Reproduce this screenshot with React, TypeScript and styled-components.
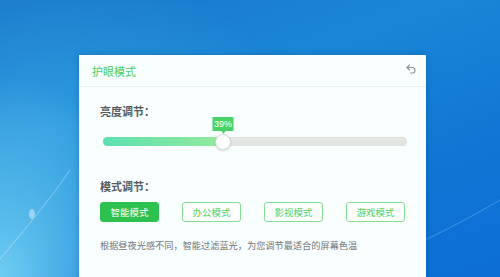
import styled, { createGlobalStyle } from 'styled-components';
import { Undo2 } from 'lucide-react';

const GlobalStyle = createGlobalStyle`
  html, body {
    margin: 0;
    padding: 0;
    overflow: hidden;
  }
  body {
    font-family: "Noto Sans CJK SC", "Noto Sans", sans-serif;
  }
`;

const Desktop = styled.div`
  position: relative;
  width: 500px;
  height: 277px;
  overflow: hidden;
  padding: 55px 0 0 79px;
  box-sizing: border-box;
  background:
    radial-gradient(ellipse 160px 200px at 0% 100%, rgba(120, 215, 245, 0.9), rgba(120, 215, 245, 0) 100%),
    radial-gradient(ellipse 240px 160px at 10% 45%, rgba(50, 160, 225, 0.8), rgba(50, 160, 225, 0) 100%),
    linear-gradient(160deg, #1877c9 0%, #1a86d6 35%, #0f76d4 70%, #0b6fd6 100%);
`;

const Streak = styled.svg`
  position: absolute;
  left: 0;
  top: 0;
  pointer-events: none;
`;

const Panel = styled.section`
  position: relative;
  width: 347px;
  height: 240px;
  background: #f9feff;
  box-shadow: 0 0 6px rgba(0, 40, 90, 0.25);
`;

const Header = styled.header`
  display: flex;
  align-items: center;
  justify-content: space-between;
  height: 31px;
  padding: 0 9px 0 13px;
  border-bottom: 1px solid #e6f3f3;
`;

const Title = styled.h1`
  margin: 0;
  font-size: 11px;
  font-weight: 400;
  color: #47cd5c;
  line-height: 18px;
`;

const BackButton = styled.button`
  display: flex;
  border: 0;
  padding: 0;
  background: none;
  color: #8c9499;
  margin-top: -3px;
`;

const Body = styled.div`
  padding: 15px 21px;
`;

const Label = styled.h2<{ $gap?: number }>`
  margin: ${({ $gap }) => $gap ?? 0}px 0 0;
  font-size: 11px;
  font-weight: 700;
  color: #555b60;
  line-height: 18px;
`;

const Track = styled.div`
  position: relative;
  margin: 17px 0 0 3px;
  width: 304px;
  height: 9px;
  border-radius: 5px;
  background: #e3e5e3;
  box-shadow: inset 0 0 0 1px #e0e2df;
`;

const Fill = styled.div`
  height: 100%;
  border-radius: 5px 0 0 5px;
  background: linear-gradient(90deg, #5ddfb1 0%, #7de6a4 60%, #96ea9c 100%);
`;

const Thumb = styled.div`
  position: absolute;
  top: 50%;
  width: 14px;
  height: 14px;
  margin: -8px 0 0 -8px;
  border-radius: 50%;
  background: #fff;
  border: 1px solid #d8dcd8;
  box-shadow: 0 1px 2px rgba(0, 0, 0, 0.15);
`;

const Tip = styled.div`
  position: absolute;
  bottom: 18px;
  left: 50%;
  transform: translateX(-50%);
  width: 21px;
  height: 14px;
  background: #49d265;
  color: #fff;
  font-family: "Liberation Sans", Arial, sans-serif;
  font-size: 9px;
  line-height: 14px;
  text-align: center;
  border-radius: 1px;

  &::after {
    content: '';
    position: absolute;
    left: 50%;
    top: 100%;
    margin-left: -2px;
    border: 2px solid transparent;
    border-top: 3px solid #49d265;
  }
`;

const Modes = styled.div`
  display: flex;
  gap: 23px;
  margin-top: 7px;
`;

const ModeButton = styled.button<{ $active?: boolean }>`
  width: 59px;
  height: 20px;
  padding: 0;
  box-sizing: border-box;
  border-radius: 3px;
  font-family: inherit;
  font-size: 9.5px;
  line-height: 17px;
  border: 1.5px solid ${({ $active }) => ($active ? '#2dc24f' : '#82de92')};
  background: ${({ $active }) => ($active ? '#2dc24f' : '#fff')};
  color: ${({ $active }) => ($active ? '#fff' : '#4ccf62')};
`;

const Hint = styled.p`
  margin: 16px 0 0;
  font-size: 9.2px;
  line-height: 14px;
  color: #70767a;
  white-space: nowrap;
`;

const MODES = ['智能模式', '办公模式', '影视模式', '游戏模式'];
const BRIGHTNESS = 39;

export default function App() {
  return (
    <>
      <GlobalStyle />
      <Desktop>
        <Streak width="500" height="277" viewBox="0 0 500 277">
          <path d="M-5 265 C 20 235, 50 200, 70 170" stroke="rgba(255,255,255,0.35)" strokeWidth="1" fill="none" />
          <path d="M425 240 C 450 228, 475 215, 500 200" stroke="rgba(160,210,255,0.35)" strokeWidth="1" fill="none" />
          <ellipse cx="32" cy="214" rx="3" ry="5" fill="rgba(255,255,255,0.4)" />
        </Streak>
        <Panel>
          <Header>
            <Title>护眼模式</Title>
            <BackButton aria-label="返回">
              <Undo2 size={12} strokeWidth={2.2} />
            </BackButton>
          </Header>
          <Body>
            <Label>亮度调节：</Label>
            <Track>
              <Fill style={{ width: `${BRIGHTNESS + 0.5}%` }} />
              <Thumb style={{ left: `${BRIGHTNESS + 0.5}%` }}>
                <Tip>{BRIGHTNESS}%</Tip>
              </Thumb>
            </Track>
            <Label $gap={31}>模式调节：</Label>
            <Modes>
              {MODES.map((m, i) => (
                <ModeButton key={m} $active={i === 0}>
                  {m}
                </ModeButton>
              ))}
            </Modes>
            <Hint>根据昼夜光感不同，智能过滤蓝光，为您调节最适合的屏幕色温</Hint>
          </Body>
        </Panel>
      </Desktop>
    </>
  );
}
